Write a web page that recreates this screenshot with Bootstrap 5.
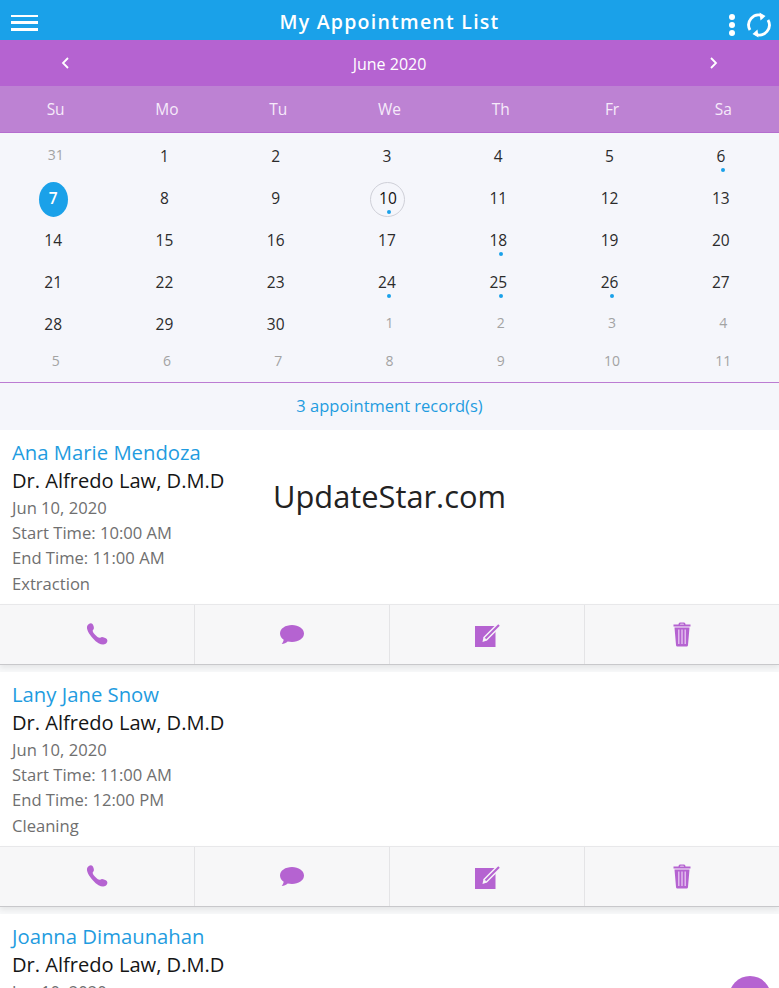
<!DOCTYPE html>
<html lang="en">
<head>
<meta charset="UTF-8">
<meta name="viewport" content="width=device-width, initial-scale=1.0">
<title>My Appointment List</title>
<link href="https://cdn.jsdelivr.net/npm/bootstrap@5.3.0/dist/css/bootstrap.min.css" rel="stylesheet">
<style>
html, body { height: 988px; overflow: hidden; }
body {
    background-color: #fff;
    font-family: "Open Sans", sans-serif;
    position: relative;
}
.top-bar { height: 40px; background-color: #1aa1e9; color: #fff; }
.top-title { font-size: 19.5px; font-weight: 600; letter-spacing: 1.25px; padding-top: 3px; }
.top-menu { left: 11px; top: 14.5px; width: 27px; }
.top-menu span { display: block; height: 2.5px; background: #fff; margin-bottom: 4.3px; }
.top-tools { right: 8px; top: 12px; gap: 12px; }
.month-bar { height: 46px; background-color: #b563d1; color: #fff; font-size: 16px; font-weight: 500; padding: 0 61px; }
.month-bar > div { padding-top: 2px; }
.week-bar { height: 47px; background-color: #bd82d3; border-bottom: 1px solid #b56dcf; color: #f6eafa; font-size: 15.5px; padding-top: 2px; }
.cal-body { background-color: #f5f6fb; padding-top: 2px; height: 250px; border-bottom: 1px solid #bc7cd3; }
.day-row { height: 42px; }
.day-row.last-row { height: 34px; }
.day-cell { position: relative; font-size: 15.5px; color: #2b2b2b; }
.day-cell.cur-month > span:first-child { margin: 2px 5px 0 0; }
.day-cell.other { color: #a3a3a3; font-size: 14px; }
.day-cell.other > span:first-child { margin-bottom: 4px; }
.day-cell.picked > span:first-child { background: #1aa1e9; color: #fff; width: 29px; height: 35px; border-radius: 50%; font-weight: 600; display: flex; align-items: center; justify-content: center; }
.day-cell.today > span:first-child { border: 1px solid #cfd0d8; color: #111; width: 35px; height: 35px; border-radius: 50%; margin-right: 3px; display: flex; align-items: center; justify-content: center; }
.rec-dot { position: absolute; width: 4px; height: 4px; border-radius: 50%; background: #1aa1e9; left: 50%; margin-left: -2px; top: 33px; }
.record-bar { height: 47px; background-color: #f5f6fb; color: #1f9ce0; font-size: 16.5px; font-weight: 500; }
.appt-info { height: 174px; padding: 8px 12px 0; color: #6f6f6f; font-size: 16.6px; line-height: 25.2px; }
.appt-name { color: #1f9ce0; font-size: 20.3px; line-height: 28px; }
.appt-doc { color: #151515; font-size: 20.1px; line-height: 29px; }
.appt-actions { height: 61px; position: relative; background-color: #f7f7f8; border-top: 1px solid #e8e8ea; border-bottom: 1px solid #c8c8cb; box-shadow: 0 3px 5px rgba(0,0,0,.07); }
.appt-actions > div + div { border-left: 1px solid #e4e4e6; }
.appt-gap { height: 7px; background-color: #f7f8f9; }
.watermark { left: 0; right: 0; top: 474px; font-size: 30.8px; line-height: 44px; color: #222; text-align: center; }
.fab-btn { width: 42px; height: 42px; border-radius: 50%; background: #b563d1; left: 729px; top: 976px; }
</style>
</head>
<body>

<div class="top-bar position-relative d-flex align-items-center justify-content-center">
    <div class="top-menu position-absolute"><span></span><span></span><span></span></div>
    <div class="top-title">My Appointment List</div>
    <div class="top-tools position-absolute d-flex align-items-center">
        <svg width="6" height="24" viewBox="0 0 6 24"><circle cx="3" cy="4" r="3" fill="#fff"/><circle cx="3" cy="12" r="3" fill="#fff"/><circle cx="3" cy="20" r="3" fill="#fff"/></svg>
        <svg width="24" height="26" viewBox="0 0 24 26" fill="none" stroke="#fff" stroke-width="2.8"><path d="M3 18A10 10 0 0 1 15 3.6"/><path d="M21 8A10 10 0 0 1 9 22.4"/><path d="M12.5 0.5l6 3.6-5 4.4z" fill="#fff" stroke="none"/><path d="M11.5 25.5l-6-3.6 5-4.4z" fill="#fff" stroke="none"/></svg>
    </div>
</div>

<div class="month-bar d-flex align-items-center justify-content-between">
    <svg width="8" height="12" viewBox="0 0 8 12" fill="none" stroke="#fff" stroke-width="1.8"><path d="M7 1L2 6l5 5"/></svg>
    <div>June 2020</div>
    <svg width="8" height="12" viewBox="0 0 8 12" fill="none" stroke="#fff" stroke-width="1.8"><path d="M1 1l5 5-5 5"/></svg>
</div>

<div class="week-bar row g-0 text-center align-items-center" id="weekBar"></div>
<div class="cal-body" id="calBody"></div>

<div class="record-bar d-flex align-items-center justify-content-center">3 appointment record(s)</div>

<div id="apptList"></div>

<div class="watermark position-absolute">UpdateStar.com</div>
<div class="fab-btn position-absolute"></div>

<script src="https://cdn.jsdelivr.net/npm/bootstrap@5.3.0/dist/js/bootstrap.bundle.min.js"></script>
<script>
const purple = "#b563d1";
const icons = {
    phone: '<svg width="25" height="25" viewBox="0 0 24 24"><path fill="'+purple+'" d="M2.2 3.6C3.4 1.4 6 .6 7.2 2c.9 1.1 1.5 3 1.3 4.3-.1 1-1.2 1.4-1.1 2.3.3 2 4.4 6.3 6.5 6.6.9.1 1.4-.9 2.4-.9 1.4 0 3.600 1 4.600 2 1.200 1.300.6 3.800-1.400 4.800-1.800.9-4.300.4-6.500-.8C9.500 18.300 5.200 13.500 3 9.300 2 7.300 1.500 5 2.200 3.600z"/></svg>',
    chat: '<svg width="26" height="22" viewBox="0 0 26 22"><path fill="'+purple+'" d="M13 1C6.400 1 1 4.500 1 9.500c0 2.600 1.400 4.800 3.700 6.300-.2 1.500-1 3-2 4.200 2.300-.2 4.400-1.100 6-2.500 1.300.3 2.800.5 4.300.5 6.600 0 12-3.600 12-8.500S19.600 1 13 1z"/></svg>',
    edit: '<svg width="25" height="25" viewBox="0 0 25 25"><path fill="'+purple+'" d="M0 4h20.500v21H0z"/><path fill="none" stroke="#f7f7f8" stroke-width="5" d="M10 17L23 4"/><path fill="#f7f7f8" d="M7.500 20l1-5 3.500 3.500z"/><path fill="none" stroke="'+purple+'" stroke-width="2.200" d="M10.500 16.500L24 3"/></svg>',
    trash: '<svg width="18" height="25" viewBox="0 0 18 25"><path fill="'+purple+'" d="M5.500 2.500C5.500 1 6.500.5 7.500.5h3c1 0 2 .5 2 2H17.500v2H.5v-2zM7 2.500h4c0-.6-.3-.8-.8-.8H7.800c-.5 0-.8.2-.8.8zM1.500 5.500h15L15 23c-.1 1-.8 1.500-1.700 1.500H4.700C3.800 24.500 3.100 24 3 23z"/><path stroke="#e9c9f2" stroke-width="1.300" d="M5.800 7.500v14.500M9 7.500v14.500M12.200 7.500v14.500"/></svg>'
};

document.getElementById("weekBar").innerHTML = ["Su","Mo","Tu","We","Th","Fr","Sa"].map(d => '<div class="col">'+d+'</div>').join("");

// date rows, other = outside June, dots = days that have records
const weeks = [
    [31,1,2,3,4,5,6],[7,8,9,10,11,12,13],[14,15,16,17,18,19,20],
    [21,22,23,24,25,26,27],[28,29,30,1,2,3,4],[5,6,7,8,9,10,11]
];
const dots = [6,10,18,24,25,26];
let html = "";
weeks.forEach((w, i) => {
    html += '<div class="day-row row g-0 text-center'+(i == 5 ? ' last-row' : '')+'">';
    w.forEach(d => {
        const other = (i == 0 && d == 31) || (i == 4 && d < 5) || i == 5;
        let cls = other ? "other" : "cur-month";
        if(!other && d == 7) cls += " picked";
        if(!other && d == 10) cls += " today";
        const dot = !other && dots.includes(d) ? '<span class="rec-dot"></span>' : "";
        html += '<div class="col day-cell d-flex align-items-center justify-content-center '+cls+'"><span>'+d+'</span>'+dot+'</div>';
    });
    html += '</div>';
});
document.getElementById("calBody").innerHTML = html;

const appts = [
    {name:"Ana Marie Mendoza", date:"Jun 10, 2020", start:"10:00 AM", end:"11:00 AM", what:"Extraction"},
    {name:"Lany Jane Snow", date:"Jun 10, 2020", start:"11:00 AM", end:"12:00 PM", what:"Cleaning"},
    {name:"Joanna Dimaunahan", date:"Jun 10, 2020"}
];
document.getElementById("apptList").innerHTML = appts.map(a => {
    let out = '<div class="appt-info">'+
        '<div class="appt-name">'+a.name+'</div>'+
        '<div class="appt-doc">Dr. Alfredo Law, D.M.D</div>'+
        '<div>'+a.date+'</div>';
    // last card runs off the screen, so it has no more lines
    if(!a.start) return out + '</div>';
    out += '<div>Start Time: '+a.start+'</div><div>End Time: '+a.end+'</div><div>'+a.what+'</div></div>'+
        '<div class="appt-actions row g-0">'+
        ["phone","chat","edit","trash"].map(k => '<div class="col d-flex align-items-center justify-content-center">'+icons[k]+'</div>').join("")+
        '</div><div class="appt-gap"></div>';
    return out;
}).join("");
</script>
</body>
</html>
